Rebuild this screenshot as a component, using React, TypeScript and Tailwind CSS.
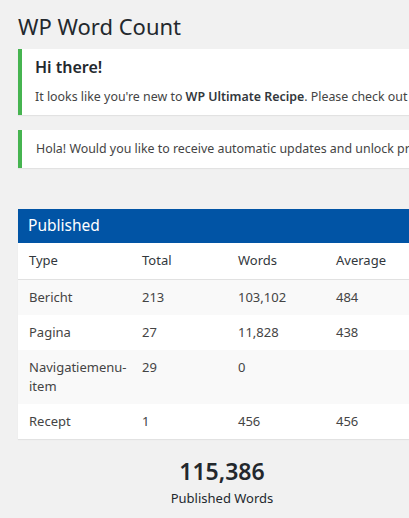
import React from 'react';

// Word count overview page

interface Row {
  type: string;
  total: string;
  words: string;
  average: string;
}

const rows: Row[] = [
  { type: 'Bericht', total: '213', words: '103,102', average: '484' },
  { type: 'Pagina', total: '27', words: '11,828', average: '438' },
  { type: 'Navigatiemenu-item', total: '29', words: '0', average: '' },
  { type: 'Recept', total: '1', words: '456', average: '456' },
];

export default function App() {
  return (
    <div
      className="min-h-[518px] w-[409px] overflow-hidden bg-[#f1f1f1] text-[#444] text-[13px]"
      style={{ fontFamily: '"Noto Sans", "Open Sans", sans-serif' }}
    >
      <div className="w-[430px] pl-[18px] pt-[12px]">
        <h1 className="text-[22px] leading-[28px] font-normal text-[#23282d]">WP Word Count</h1>

        {/* Notices */}
        <div className="mt-[9px] border-l-4 border-[#46b450] bg-white shadow-[0_1px_1px_rgba(0,0,0,0.06)] pl-[13px] pr-3 pt-[7px] pb-[8px]">
          <h2 className="text-[16px] leading-[22px] font-semibold text-[#23282d]">Hi there!</h2>
          <p className="mt-[9px] whitespace-nowrap text-[12.4px] leading-[20px]">
            It looks like you're new to <strong className="font-semibold text-[#32373c]">WP Ultimate Recipe</strong>. Please check out our documentation
          </p>
        </div>

        <div className="mt-[15px] border-l-4 border-[#46b450] bg-white shadow-[0_1px_1px_rgba(0,0,0,0.06)] pl-[14px] pr-3 py-[9px]">
          <p className="whitespace-nowrap text-[12.4px] leading-[20px]">
            Hola! Would you like to receive automatic updates and unlock premium support?
          </p>
        </div>

        {/* Published table */}
        <div className="mt-[41px] w-[412px] bg-white shadow-[0_1px_1px_rgba(0,0,0,0.06)]">
          <div className="bg-[#0154a5] h-[34px] flex items-center pl-[10px]">
            <span className="text-white text-[15.5px]">Published</span>
          </div>
          <table className="w-full table-fixed border-collapse">
            <thead>
              <tr className="border-b border-[#e1e1e1] text-[#32373c] text-[13px]">
                <th className="w-[124px] h-[36px] pl-[11px] text-left font-normal">Type</th>
                <th className="w-[96px] text-left font-normal">Total</th>
                <th className="w-[98px] text-left font-normal">Words</th>
                <th className="text-left font-normal">Average</th>
              </tr>
            </thead>
            <tbody>
              {rows.map((row, i) => (
                <tr key={row.type} className={i % 2 === 0 ? 'bg-[#f9f9f9]' : 'bg-white'}>
                  <td className="pl-[11px] pr-2 py-[8px] align-top leading-[19px] break-words">{row.type}</td>
                  <td className="py-[8px] align-top leading-[19px]">{row.total}</td>
                  <td className="py-[8px] align-top leading-[19px]">{row.words}</td>
                  <td className="py-[8px] align-top leading-[19px]">{row.average}</td>
                </tr>
              ))}
            </tbody>
          </table>
        </div>

        {/* Totals */}
        <div className="w-[408px] mt-[17px] text-center">
          <div className="text-[23px] leading-[30px] font-semibold text-[#23282d]">115,386</div>
          <div className="mt-[3px] text-[13px] text-[#23282d]">Published Words</div>
        </div>
      </div>
    </div>
  );
}
